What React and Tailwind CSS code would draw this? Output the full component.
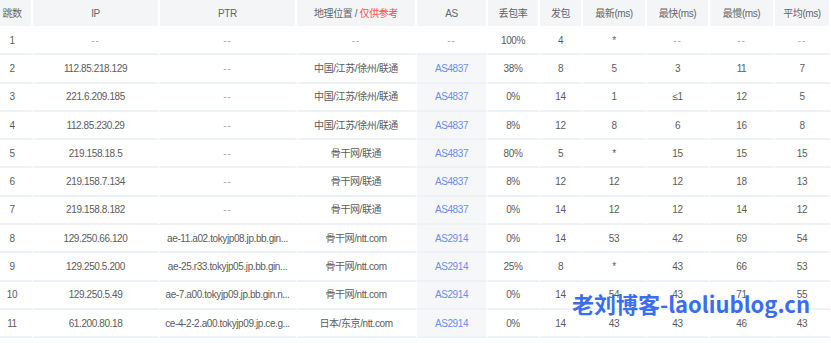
import React from "react";

const cols = [
  { w: "w-[33px]", pad: "pr-[7px]" },
  { w: "w-[127px]" },
  { w: "w-[137px]" },
  { w: "w-[120px]" },
  { w: "w-[71px]" },
  { w: "w-[52px]" },
  { w: "w-[43px]" },
  { w: "w-[64px]" },
  { w: "w-[63px]" },
  { w: "w-[65px]" },
  { w: "w-[56px]" },
];

const rows = [
  ["1", "--", "--", "--", "--", "100%", "4", "*", "--", "--", "--"],
  ["2", "112.85.218.129", "--", "中国/江苏/徐州/联通", "AS4837", "38%", "8", "5", "3", "11", "7"],
  ["3", "221.6.209.185", "--", "中国/江苏/徐州/联通", "AS4837", "0%", "14", "1", "≤1", "12", "5"],
  ["4", "112.85.230.29", "--", "中国/江苏/徐州/联通", "AS4837", "8%", "12", "8", "6", "16", "8"],
  ["5", "219.158.18.5", "--", "骨干网/联通", "AS4837", "80%", "5", "*", "15", "15", "15"],
  ["6", "219.158.7.134", "--", "骨干网/联通", "AS4837", "8%", "12", "12", "12", "18", "13"],
  ["7", "219.158.8.182", "--", "骨干网/联通", "AS4837", "0%", "14", "12", "12", "14", "12"],
  ["8", "129.250.66.120", "ae-11.a02.tokyjp08.jp.bb.gin...", "骨干网/ntt.com", "AS2914", "0%", "14", "53", "42", "69", "54"],
  ["9", "129.250.5.200", "ae-25.r33.tokyjp05.jp.bb.gin...", "骨干网/ntt.com", "AS2914", "25%", "8", "*", "43", "66", "53"],
  ["10", "129.250.5.49", "ae-7.a00.tokyjp09.jp.bb.gin.n...", "骨干网/ntt.com", "AS2914", "0%", "14", "54", "43", "71", "55"],
  ["11", "61.200.80.18", "ce-4-2-2.a00.tokyjp09.jp.ce.g...", "日本/东京/ntt.com", "AS2914", "0%", "14", "43", "43", "46", "43"],
];

const headers = ["跳数", "IP", "PTR", null, "AS", "丢包率", "发包", "最新(ms)", "最快(ms)", "最慢(ms)", "平均(ms)"];

export default function App() {
  return (
    <div className="relative w-[831px] h-[343px] bg-white overflow-hidden font-['Liberation_Sans','Noto_Sans_CJK_SC',sans-serif] text-[10px] tracking-[-0.4px] text-[#5c5c5c]">
      {/* header */}
      <div className="flex h-[26px] mb-[1px]">
        {headers.map((h, i) => (
          <div
            key={i}
            className={`${cols[i].w} ${cols[i].pad || ""} shrink-0 flex items-center justify-center bg-[#f4f5f7] border-r-2 border-white text-[#666]`}
          >
            {h === null ? (
              <span>
                地理位置 / <span className="text-[#f5504f]">仅供参考</span>
              </span>
            ) : (
              h
            )}
          </div>
        ))}
      </div>

      {/* rows */}
      {rows.map((r, ri) => (
        <div key={ri} className="flex h-[28.3px]">
          {r.map((c, ci) => {
            const isAs = ci === 4 && c !== "--";
            return (
              <div
                key={ci}
                className={`${cols[ci].w} ${cols[ci].pad || ""} shrink-0 flex items-center justify-center whitespace-nowrap border-r-2 border-r-white border-b-2 border-b-[#eef1f6] ${
                  isAs ? "bg-[#f6f7f9] text-[#6b8cf2]" : ""
                } ${c === "--" ? "text-[#aaa] tracking-[1px]" : ""}`}
              >
                {c}
              </div>
            );
          })}
        </div>
      ))}

      {/* watermark */}
      <div className="absolute left-[572px] top-[292px] font-['Noto_Sans_CJK_SC',sans-serif] font-bold text-[22px] leading-none tracking-normal text-[#3a6df0]">
        老刘博客-laoliublog.cn
      </div>
    </div>
  );
}
